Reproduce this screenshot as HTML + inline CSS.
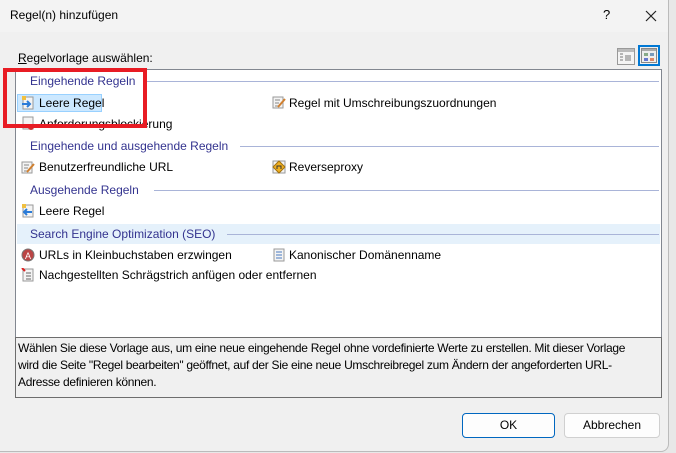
<!DOCTYPE html>
<html><head><meta charset="utf-8"><style>
*{margin:0;padding:0;box-sizing:border-box}
body{width:676px;height:453px;background:#e8e8e8;font-family:"Liberation Sans",sans-serif;font-size:12px;color:#000;position:relative;overflow:hidden}
.win{position:absolute;left:0;top:0;width:669px;height:452px;background:#f0f0f0;border-right:1px solid #bbb;border-bottom:1px solid #bbb;border-radius:0 0 8px 0}
.tb{position:absolute;left:0;top:0;width:668px;height:32px;background:#f3f3f3}
.a{position:absolute;white-space:nowrap}
.list{position:absolute;left:15px;top:69px;width:647px;height:269px;background:#fff;border:1px solid #828790}
.desc{position:absolute;left:15px;top:337px;width:647px;height:61px;background:#f0f0f0;border:1px solid #6d6d6d;padding:2px 2px;line-height:17px;letter-spacing:-0.3px;white-space:nowrap;overflow:hidden}
.hd{color:#33338f}
.ln{position:absolute;height:1px;background:#a9b4d8}
.ic{position:absolute;width:14px;height:14px}
.btn{position:absolute;height:25px;background:#fdfdfd;border:1px solid #d0d0d0;border-radius:4px;text-align:center;line-height:23px}
</style></head><body>
<div class="win">
<div class="tb"></div>
<div class="a" style="left:10px;top:8px">Regel(n) hinzufügen</div>
<div class="a" style="left:603px;top:7px;font-size:13px">?</div>
<svg class="a" style="left:645px;top:10px" width="12" height="12"><path d="M1 1L11 11M11 1L1 11" stroke="#222" stroke-width="1.2"/></svg>
<div class="a" style="left:18px;top:51px"><u>R</u>egelvorlage auswählen:</div>
<svg class="a" style="left:617px;top:48px" width="18" height="17"><rect x="0.5" y="0.5" width="17" height="16" fill="#f4f4f4" stroke="#999"/><rect x="1" y="1" width="16" height="3" fill="#bbb"/><path d="M3 6h3M3 9h3M3 12h3M8 8h6M8 10h6M8 12h6" stroke="#777"/></svg>
<div class="a" style="left:638px;top:45px;width:22px;height:21px;border:2px solid #0078d4"></div>
<svg class="a" style="left:641px;top:48px" width="16" height="15"><rect x="0.5" y="0.5" width="15" height="14" fill="#eee" stroke="#888"/><rect x="1" y="1" width="14" height="2" fill="#aaa"/><rect x="3" y="5" width="4" height="3" fill="#8a8"/><rect x="9" y="5" width="4" height="3" fill="#79b"/><rect x="3" y="10" width="4" height="3" fill="#67c"/><rect x="9" y="10" width="4" height="3" fill="#d86"/></svg>
<div class="list">
<div class="a hd" style="left:14px;top:4px">Eingehende Regeln</div><div class="ln" style="left:127px;top:11px;width:516px"></div>
<div class="a" style="left:1px;top:24px;width:85px;height:18px;background:#cce8ff;border:1px solid #99d1ff"></div>
<svg class="ic" style="left:5px;top:26px"><rect x="2" y="1" width="10" height="12" fill="#f4f4f4" stroke="#999"/><rect x="1" y="0" width="4" height="4" fill="#f0c040"/><path d="M1 8h8M6 5l3 3-3 3" stroke="#2a7bd8" stroke-width="2" fill="none"/></svg>
<div class="a" style="left:23px;top:26px">Leere Regel</div>
<svg class="ic" style="left:5px;top:46px"><rect x="2" y="1" width="10" height="12" fill="#f4f4f4" stroke="#999"/><circle cx="10" cy="11" r="3" fill="#c33"/></svg>
<div class="a" style="left:23px;top:47px">Anforderungsblockierung</div>
<svg class="ic" style="left:256px;top:25px"><rect x="1" y="2" width="10" height="11" fill="#f4f4f4" stroke="#999"/><path d="M3 5h5M3 8h4M3 11h3" stroke="#888"/><path d="M6 12l7-8" stroke="#d08030" stroke-width="2"/></svg>
<div class="a" style="left:273px;top:26px">Regel mit Umschreibungszuordnungen</div>
<div class="a hd" style="left:14px;top:69px">Eingehende und ausgehende Regeln</div><div class="ln" style="left:224px;top:76px;width:419px"></div>
<svg class="ic" style="left:5px;top:90px"><rect x="1" y="2" width="10" height="11" fill="#f4f4f4" stroke="#999"/><path d="M3 5h5M3 8h4M3 11h3" stroke="#888"/><path d="M6 12l7-8" stroke="#d08030" stroke-width="2"/></svg>
<div class="a" style="left:23px;top:90px">Benutzerfreundliche URL</div>
<svg class="ic" style="left:256px;top:90px"><rect x="1" y="1" width="12" height="12" fill="#f4f4f4" stroke="#999"/><path d="M7 1L13 7 7 13 1 7Z" fill="#f0b020" stroke="#a07010"/><path d="M5 9V6h4v3" stroke="#333" fill="none"/></svg>
<div class="a" style="left:273px;top:90px">Reverseproxy</div>
<div class="a hd" style="left:14px;top:113px">Ausgehende Regeln</div><div class="ln" style="left:138px;top:120px;width:505px"></div>
<svg class="ic" style="left:5px;top:134px"><rect x="2" y="1" width="10" height="12" fill="#f4f4f4" stroke="#999"/><rect x="1" y="0" width="4" height="4" fill="#f0c040"/><path d="M11 8H3M6 5L3 8l3 3" stroke="#2a7bd8" stroke-width="2" fill="none"/></svg>
<div class="a" style="left:23px;top:134px">Leere Regel</div>
<div class="a" style="left:1px;top:154px;width:643px;height:20px;background:#e5f1fb"></div>
<div class="a hd" style="left:14px;top:157px">Search Engine Optimization (SEO)</div><div class="ln" style="left:211px;top:164px;width:432px"></div>
<svg class="ic" style="left:5px;top:178px"><circle cx="7" cy="7" r="6" fill="#b44" stroke="#777"/><text x="4" y="11" font-size="9" fill="#fff" font-family="Liberation Sans">A</text></svg>
<div class="a" style="left:23px;top:178px">URLs in Kleinbuchstaben erzwingen</div>
<svg class="ic" style="left:256px;top:178px"><rect x="2" y="1" width="10" height="12" fill="#f4f4f4" stroke="#999"/><path d="M4 4h6M4 7h6M4 10h6" stroke="#4a7ac0"/></svg>
<div class="a" style="left:273px;top:178px">Kanonischer Domänenname</div>
<svg class="ic" style="left:5px;top:198px"><rect x="2" y="1" width="10" height="12" fill="#f4f4f4" stroke="#999"/><path d="M5 5h5M5 8h5M5 11h5" stroke="#666"/><path d="M1 0l3 3" stroke="#d22" stroke-width="2"/></svg>
<div class="a" style="left:23px;top:198px">Nachgestellten Schrägstrich anfügen oder entfernen</div>
</div>
<div class="desc">Wählen Sie diese Vorlage aus, um eine neue eingehende Regel ohne vordefinierte Werte zu erstellen. Mit dieser Vorlage<br>wird die Seite "Regel bearbeiten" geöffnet, auf der Sie eine neue Umschreibregel zum Ändern der angeforderten URL-<br>Adresse definieren können.</div>
<div class="btn" style="left:462px;top:413px;width:93px;border-color:#0067c0">OK</div>
<div class="btn" style="left:564px;top:413px;width:96px">Abbrechen</div>
<div class="a" style="left:3px;top:68px;width:144px;height:60px;border:4px solid #e81c24"></div>
</div>
</body></html>
